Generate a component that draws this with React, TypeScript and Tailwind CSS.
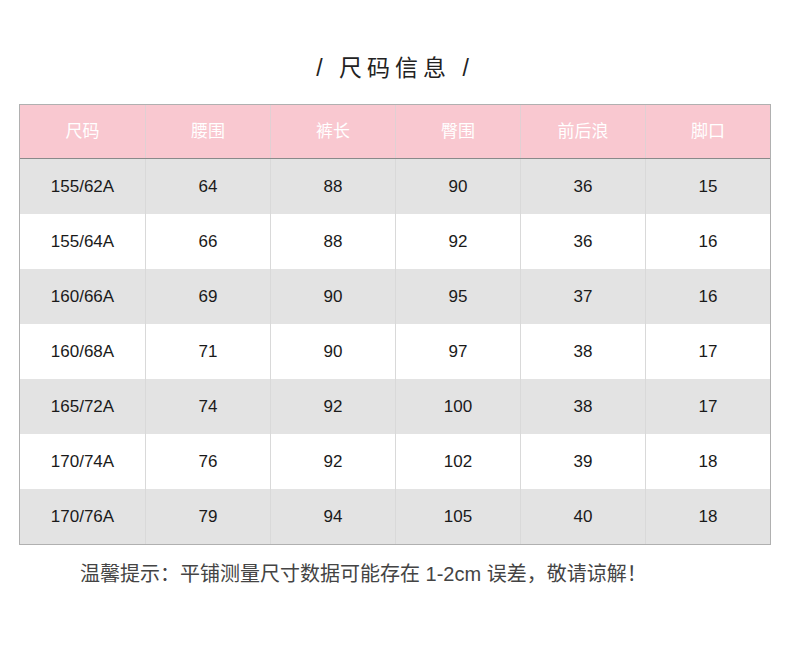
import React from "react";

const headers = ["尺码", "腰围", "裤长", "臀围", "前后浪", "脚口"];

const rows = [
  ["155/62A", "64", "88", "90", "36", "15"],
  ["155/64A", "66", "88", "92", "36", "16"],
  ["160/66A", "69", "90", "95", "37", "16"],
  ["160/68A", "71", "90", "97", "38", "17"],
  ["165/72A", "74", "92", "100", "38", "17"],
  ["170/74A", "76", "92", "102", "39", "18"],
  ["170/76A", "79", "94", "105", "40", "18"],
];

const font = {
  fontFamily: '"Liberation Sans", "Noto Sans CJK SC", sans-serif',
};

export default function App() {
  return (
    <div className="w-[790px] h-[650px] bg-white pt-[50px]" style={font}>
      <h2 className="text-center text-[23px] leading-[36px] tracking-[5px] text-[#222] font-normal">
        / 尺码信息 /
      </h2>

      <div className="mx-[19px] mt-[18px] border border-[#b0b0b0]">
        <div className="grid grid-cols-6 h-[54px] bg-[#f9c8d0] border-b border-[#8a8a8a]">
          {headers.map((h, i) => (
            <div
              key={h}
              className={`flex items-center justify-center text-white text-[17px] ${
                i > 0 ? "border-l border-[#e0d0d3]" : ""
              }`}
            >
              {h}
            </div>
          ))}
        </div>
        {rows.map((r, ri) => (
          <div
            key={r[0]}
            className={`grid grid-cols-6 h-[55px] ${
              ri % 2 === 0 ? "bg-[#e3e3e3]" : "bg-white"
            }`}
          >
            {r.map((c, ci) => (
              <div
                key={ci}
                className={`flex items-center justify-center text-[17px] text-[#1a1a1a] ${
                  ci > 0 ? "border-l border-[#d9d9d9]" : ""
                }`}
              >
                {c}
              </div>
            ))}
          </div>
        ))}
      </div>

      <p className="mt-[14px] pl-[80px] text-[20px] leading-[30px] text-[#444]">
        温馨提示：平铺测量尺寸数据可能存在 1-2cm 误差，敬请谅解！
      </p>
    </div>
  );
}
